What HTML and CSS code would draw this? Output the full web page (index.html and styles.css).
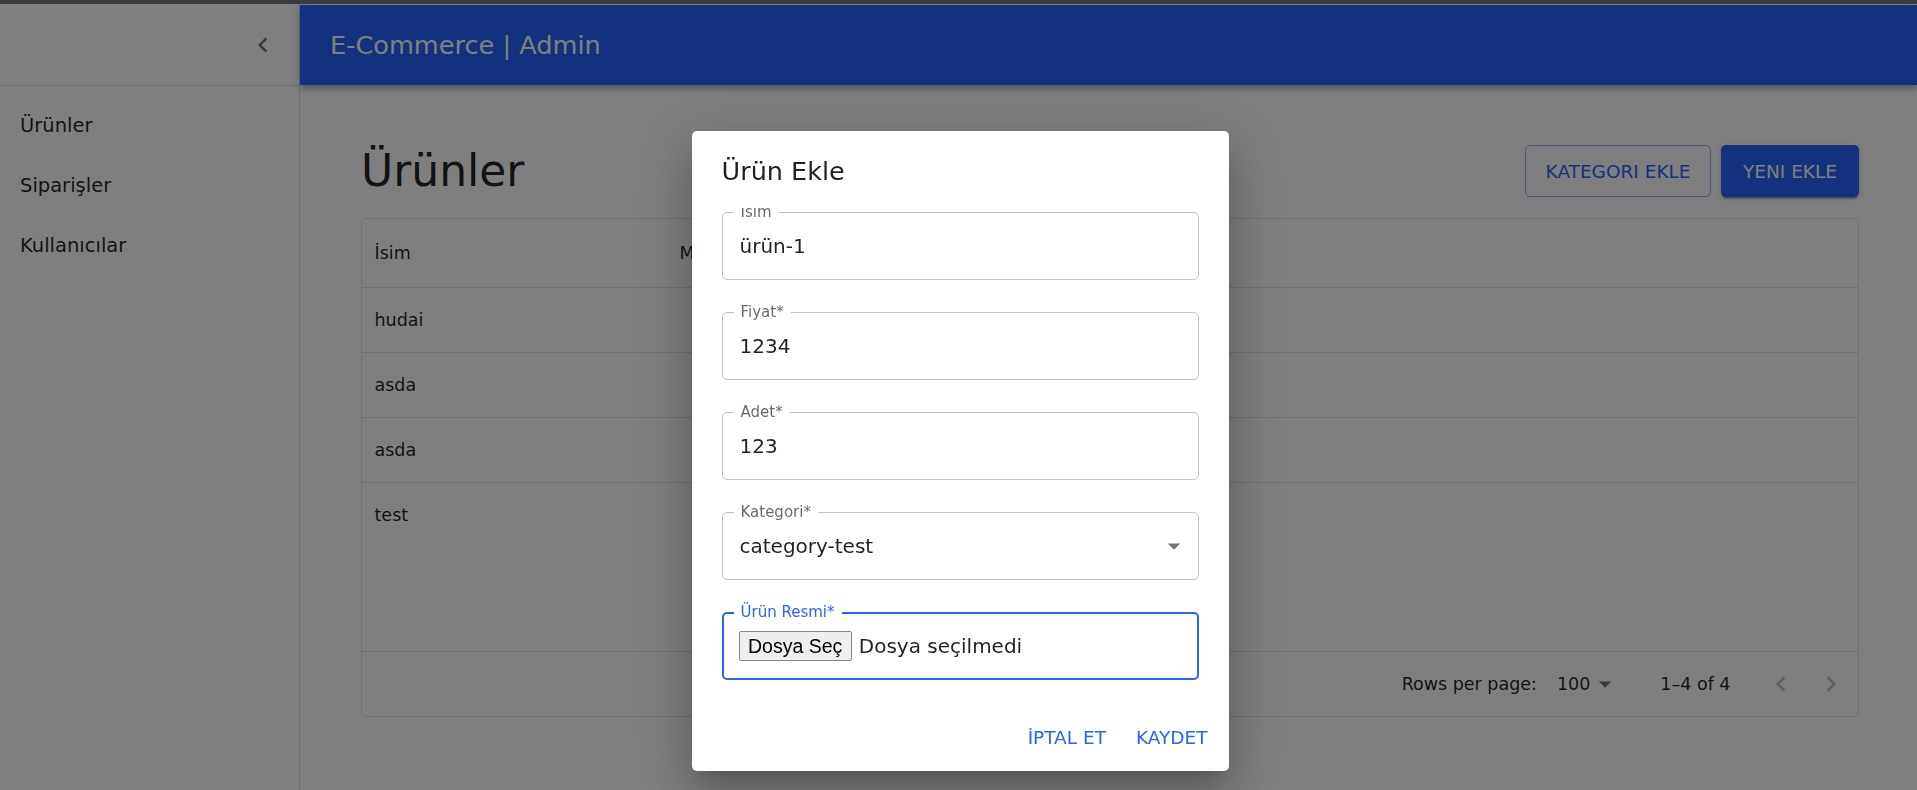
FILE: index.html
```html
<!DOCTYPE html>
<html lang="tr">
<head>
<meta charset="utf-8">
<title>E-Commerce | Admin</title>
<link rel="stylesheet" href="styles.css">
</head>
<body>
<div class="topstrip"></div>
<div class="app">
  <aside class="sidebar">
    <div class="side-toolbar">
      <span class="icon-btn">
        <svg viewBox="0 0 24 24" width="30" height="30"><path d="M15.41 7.41 14 6l-6 6 6 6 1.41-1.41L10.83 12z" fill="rgba(0,0,0,0.54)"/></svg>
      </span>
    </div>
    <ul class="nav">
      <li>Ürünler</li>
      <li>Siparişler</li>
      <li>Kullanıcılar</li>
    </ul>
  </aside>
  <div class="main-col">
    <header class="appbar">E-Commerce | Admin</header>
    <main class="content">
      <div class="page-head">
        <h1>Ürünler</h1>
        <div class="head-actions">
          <button class="btn btn-outlined">KATEGORI EKLE</button>
          <button class="btn btn-contained">YENI EKLE</button>
        </div>
      </div>
      <div class="grid">
        <div class="grid-head">
          <div class="cell c1">İsim</div>
          <div class="cell c2">Miktar</div>
        </div>
        <div class="grid-body">
          <div class="grid-row"><div class="cell c1">hudai</div></div>
          <div class="grid-row"><div class="cell c1">asda</div></div>
          <div class="grid-row"><div class="cell c1">asda</div></div>
          <div class="grid-row last"><div class="cell c1">test</div></div>
        </div>
        <div class="grid-foot">
          <span class="rpp">Rows per page:</span>
          <span class="rpp-select">100
            <svg class="drop" viewBox="0 0 24 24" width="30" height="30"><path d="M7 10l5 5 5-5z" fill="rgba(0,0,0,0.54)"/></svg>
          </span>
          <span class="rows-count">1–4 of 4</span>
          <span class="pager">
            <span class="pg-btn"><svg viewBox="0 0 24 24" width="30" height="30"><path d="M15.41 16.59 10.83 12l4.58-4.59L14 6l-6 6 6 6 1.41-1.41z" fill="rgba(0,0,0,0.26)"/></svg></span>
            <span class="pg-btn"><svg viewBox="0 0 24 24" width="30" height="30"><path d="M8.59 16.59 13.17 12 8.59 7.41 10 6l6 6-6 6-1.41-1.41z" fill="rgba(0,0,0,0.26)"/></svg></span>
          </span>
        </div>
      </div>
    </main>
  </div>
</div>

<div class="backdrop">
  <div class="dialog">
    <h2 class="dlg-title">Ürün Ekle</h2>
    <div class="dlg-content">
      <div class="field">
        <span class="flabel">İsim</span>
        <span class="fvalue">ürün-1</span>
      </div>
      <div class="field">
        <span class="flabel">Fiyat*</span>
        <span class="fvalue">1234</span>
      </div>
      <div class="field">
        <span class="flabel">Adet*</span>
        <span class="fvalue">123</span>
      </div>
      <div class="field select">
        <span class="flabel">Kategori*</span>
        <span class="fvalue">category-test</span>
        <svg class="sel-arrow" viewBox="0 0 24 24" width="30" height="30"><path d="M7 10l5 5 5-5z" fill="rgba(0,0,0,0.54)"/></svg>
      </div>
      <div class="field focused">
        <span class="flabel">Ürün Resmi*</span>
        <span class="file-btn">Dosya Seç</span>
        <span class="fvalue file-text">Dosya seçilmedi</span>
      </div>
    </div>
    <div class="dlg-actions">
      <button class="tbtn">İPTAL ET</button>
      <button class="tbtn">KAYDET</button>
    </div>
  </div>
</div>
</body>
</html>
```

FILE: styles.css
```css
* { box-sizing: border-box; }
html, body { margin: 0; padding: 0; }
body {
  width: 1917px;
  height: 790px;
  overflow: hidden;
  background: #ffffff;
  font-family: "DejaVu Sans", "Liberation Sans", sans-serif;
  color: rgba(0,0,0,0.87);
}
.topstrip { height: 4px; background: #76787e; }
.app { display: flex; height: 786px; }

/* sidebar */
.sidebar {
  width: 300px;
  flex: 0 0 300px;
  border-right: 1px solid rgba(0,0,0,0.12);
  background: #fff;
}
.side-toolbar {
  height: 82px;
  border-bottom: 1px solid rgba(0,0,0,0.12);
  display: flex;
  align-items: center;
  justify-content: flex-end;
  padding-right: 11px;
}
.icon-btn {
  width: 50px; height: 50px;
  display: flex; align-items: center; justify-content: center;
}
.nav { list-style: none; margin: 0; padding: 10px 0 0; }
.nav li {
  height: 60px;
  line-height: 60px;
  padding: 0 20px;
  font-size: 19.5px;
}

/* main column */
.main-col { flex: 1; display: flex; flex-direction: column; min-width: 0; }
.appbar {
  margin-top: 1px;
  height: 80px;
  background: #2962ff;
  color: #fff;
  font-size: 25.6px;
  font-weight: 500;
  display: flex;
  align-items: center;
  padding: 0 30px;
  box-shadow: 0 2px 5px -1px rgba(0,0,0,0.2), 0 5px 6px 0 rgba(0,0,0,0.14), 0 1px 12px 0 rgba(0,0,0,0.12);
  position: relative;
}
.content { padding: 60px 58px 0 61px; }
.page-head {
  display: flex;
  justify-content: space-between;
  align-items: center;
  height: 52px;
}
.page-head h1 {
  margin: 0;
  font-size: 44px;
  font-weight: 400;
  line-height: 52px;
}
.head-actions { display: flex; gap: 10px; }
.btn {
  height: 52px;
  font-family: inherit;
  font-size: 18.5px;
  font-weight: 500;
  border-radius: 5px;
  cursor: pointer;
}
.btn-outlined {
  background: transparent;
  color: #2962ff;
  border: 1px solid rgba(41,98,255,0.5);
  padding: 0 19.5px;
}
.btn-contained {
  background: #2962ff;
  color: #fff;
  border: none;
  padding: 0 22px;
  box-shadow: 0 4px 1px -2px rgba(0,0,0,0.2), 0 2px 2px 0 rgba(0,0,0,0.14), 0 1px 6px 0 rgba(0,0,0,0.12);
}

/* data grid */
.grid {
  margin-top: 21px;
  height: 499px;
  border: 1px solid #e0e0e0;
  border-radius: 5px;
  display: flex;
  flex-direction: column;
  font-size: 17.5px;
}
.grid-head {
  height: 69px;
  border-bottom: 1px solid #e0e0e0;
  display: flex;
  align-items: center;
  font-weight: 500;
}
.cell { padding: 0 12.5px; }
.c1 { width: 305px; }
.grid-body { flex: 1; }
.grid-row {
  height: 65px;
  border-bottom: 1px solid #e0e0e0;
  display: flex;
  align-items: center;
}
.grid-row.last { border-bottom-color: transparent; }
.grid-foot {
  height: 65px;
  border-top: 1px solid #e0e0e0;
  display: flex;
  align-items: center;
  justify-content: flex-end;
  padding-right: 2.5px;
}
.rpp-select {
  position: relative;
  margin: 0 40px 0 10px;
  padding: 0 30px 0 10px;
  display: flex;
  align-items: center;
}
.rpp-select .drop { position: absolute; right: 0; top: 50%; margin-top: -15px; }
.pager { margin-left: 25px; display: flex; }
.pg-btn { width: 50px; height: 50px; display: flex; align-items: center; justify-content: center; }

/* dialog */
.backdrop {
  position: fixed;
  inset: 0;
  background: rgba(0,0,0,0.5);
  display: flex;
  justify-content: center;
  align-items: flex-start;
  padding-left: 3px;
}
.dialog {
  margin-top: 131px;
  width: 537px;
  background: #fff;
  border-radius: 5px;
  box-shadow: 0 14px 19px -9px rgba(0,0,0,0.2), 0 30px 48px 4px rgba(0,0,0,0.14), 0 11px 57px 10px rgba(0,0,0,0.12);
}
.dlg-title {
  margin: 0;
  padding: 20px 30px 17px;
  font-size: 25.5px;
  font-weight: 500;
  line-height: 40px;
}
.dlg-content {
  padding: 4px 30px 20px;
  overflow: hidden;
}
.field {
  position: relative;
  height: 68px;
  border: 1px solid #c4c4c4;
  border-radius: 5px;
  display: flex;
  align-items: center;
  padding: 0 17px;
  margin-bottom: 32px;
  font-size: 20px;
}
.field:last-child { margin-bottom: 0; }
.flabel {
  position: absolute;
  top: -9px;
  left: 11px;
  padding: 0 7px;
  background: #fff;
  font-size: 15px;
  line-height: 16px;
  color: rgba(0,0,0,0.6);
}
.fvalue { line-height: 29px; }
.sel-arrow { position: absolute; right: 9px; top: 50%; margin-top: -15px; }
.field.focused {
  border: 2px solid #2962ff;
  padding: 0 15px;
}
.field.focused .flabel { color: #2962ff; top: -10px; left: 10px; }
.file-btn {
  font-family: "Liberation Sans", Arial, sans-serif;
  font-size: 19.5px;
  color: #000;
  background: #efefef;
  border: 1px solid #858585;
  border-radius: 2px;
  height: 30px;
  line-height: 28px;
  padding: 0 8.5px;
  margin-right: 7px;
}
.dlg-actions {
  display: flex;
  justify-content: flex-end;
  gap: 10px;
  padding: 14.5px 11px 10.5px;
}
.tbtn {
  height: 46px;
  padding: 0 10px;
  background: transparent;
  border: none;
  font-family: inherit;
  font-size: 18.5px;
  font-weight: 500;
  color: #2962ff;
  cursor: pointer;
}
```
